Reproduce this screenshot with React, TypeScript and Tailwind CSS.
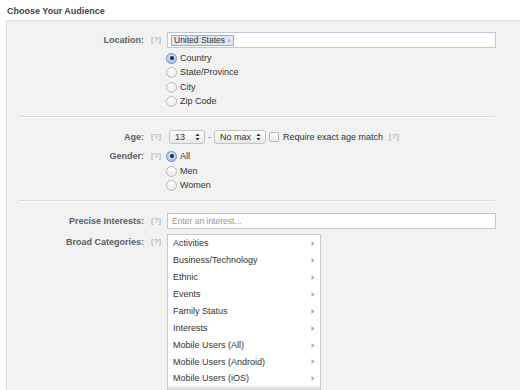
import React from "react";

const font = { fontFamily: '"Liberation Sans", Arial, sans-serif' };

function Help() {
  return <span className="text-[8px] leading-none text-[#a0a0a0] tracking-[0.5px]">[?]</span>;
}

function Label({ text }: { text: string }) {
  return (
    <div className="flex shrink-0 items-center h-[16px] leading-none">
      <div className="w-[137px] text-right font-bold text-[9px] text-[#5a5f66]">{text}</div>
      <div className="w-[23px] pl-[7px] text-[8px] flex items-center"><Help /></div>
    </div>
  );
}

function Radio({ checked, label, h }: { checked?: boolean; label: string; h: string }) {
  return (
    <div className={`flex items-center ${h}`}>
      {checked ? (
        <span className="w-[11px] h-[11px] rounded-full border border-[#6b8fc4] bg-gradient-to-b from-[#dbe8f8] to-[#a9c6ec] flex items-center justify-center shadow-[inset_0_1px_1px_rgba(0,0,0,0.1)]">
          <span className="w-[4px] h-[4px] rounded-full bg-[#1d2a3d]" />
        </span>
      ) : (
        <span className="w-[11px] h-[11px] rounded-full border border-[#b8b8b8] bg-gradient-to-b from-[#ffffff] to-[#ececec] shadow-[0_1px_0_rgba(255,255,255,0.8)]" />
      )}
      <span className="ml-[3px] text-[9px] text-[#333]">{label}</span>
    </div>
  );
}

function Arrows() {
  return (
    <svg width="5" height="8" viewBox="0 0 5 8" className="ml-auto">
      <path d="M2.5 0.5 L4.5 3 L0.5 3 Z" fill="#333" />
      <path d="M2.5 7.5 L4.5 5 L0.5 5 Z" fill="#333" />
    </svg>
  );
}

function Sep() {
  return <div className="ml-[13px] w-[475px] border-t border-[#dcdcdc] border-b border-b-white" />;
}

const cats = [
  "Activities",
  "Business/Technology",
  "Ethnic",
  "Events",
  "Family Status",
  "Interests",
  "Mobile Users (All)",
  "Mobile Users (Android)",
  "Mobile Users (iOS)",
];

export default function App() {
  return (
    <div className="w-[520px] h-[390px] bg-white overflow-hidden text-[9px] leading-[1.2]" style={font}>
      <div className="h-[20px] pl-[7px] pt-[6px] font-bold text-[9px] text-[#444]">Choose Your Audience</div>
      <div className="ml-[6px] w-[514px] h-[370px] bg-[#f2f2f2] border-t border-l border-[#dedede] pt-[11px]">
        {/* Location */}
        <div className="flex">
          <Label text="Location:" />
          <div className="flex flex-col">
            <div className="w-[329px] h-[16px] bg-white border border-[#bdc7d8] flex items-center pl-[3px]">
              <span className="h-[11px] flex items-center px-[2px] bg-[#e2e6f0] border border-[#9dacc9] text-[8.5px] text-[#333] leading-none">
                United States<span className="ml-[2px] text-[#8d9bb8] text-[7px]">×</span>
              </span>
            </div>
            <div className="mt-[3px] -ml-[1px]">
              <Radio checked label="Country" h="h-[14.5px]" />
              <Radio label="State/Province" h="h-[14.5px]" />
              <Radio label="City" h="h-[14.5px]" />
              <Radio label="Zip Code" h="h-[14.5px]" />
            </div>
          </div>
        </div>
        <div className="mt-[7px]"><Sep /></div>
        {/* Age */}
        <div className="flex items-center mt-[11px] h-[16px]">
          <Label text="Age:" />
          <div className="flex items-center">
            <div className="ml-[2px] w-[36px] h-[14px] rounded-[3px] border border-[#c4c4c4] bg-gradient-to-b from-white to-[#e8e8e8] flex items-center pl-[5px] pr-[4px] text-[9px] text-[#333]">
              13<Arrows />
            </div>
            <span className="mx-[3px] text-[9px] text-[#666]">-</span>
            <div className="w-[52px] h-[14px] rounded-[3px] border border-[#c4c4c4] bg-gradient-to-b from-white to-[#e8e8e8] flex items-center pl-[5px] pr-[4px] text-[9px] text-[#333]">
              No max<Arrows />
            </div>
            <span className="ml-[3px] w-[10px] h-[10px] rounded-[2px] border border-[#b3b3b3] bg-gradient-to-b from-white to-[#ededed]" />
            <span className="ml-[4px] text-[9px] text-[#333]">Require exact age match</span>
            <span className="ml-[6px] flex items-center"><Help /></span>
          </div>
        </div>
        {/* Gender */}
        <div className="flex mt-[4px]">
          <div className="h-[14.75px] flex items-center"><Label text="Gender:" /></div>
          <div className="-ml-[1px]">
            <Radio checked label="All" h="h-[14.75px]" />
            <Radio label="Men" h="h-[14.75px]" />
            <Radio label="Women" h="h-[14.75px]" />
          </div>
        </div>
        <div className="mt-[7px]"><Sep /></div>
        {/* Precise */}
        <div className="flex mt-[11px]">
          <Label text="Precise Interests:" />
          <div className="w-[329px] h-[16px] bg-white border border-[#bdc7d8] flex items-center pl-[4px] text-[8.5px] text-[#999]">
            Enter an interest...
          </div>
        </div>
        {/* Broad */}
        <div className="flex mt-[5px]">
          <div><Label text="Broad Categories:" /></div>
          <div className="relative w-[154px] h-[160px] bg-white border border-[#c9c9c9] border-b-0 overflow-hidden">
            <div>
              {cats.map((c) => (
                <div key={c} className="h-[16.9px] flex items-center pl-[5px] pr-[5px] text-[9px] text-[#333]">
                  <span>{c}</span>
                  <svg width="4" height="5" viewBox="0 0 4 5" className="ml-auto">
                    <path d="M0.5 0 L3.5 2.5 L0.5 5 Z" fill="#aaa" />
                  </svg>
                </div>
              ))}
            </div>
            <div className="absolute left-0 right-0 top-[150px] h-[6px] bg-gradient-to-b from-transparent to-[#c8c8c8]" />
          </div>
        </div>
      </div>
    </div>
  );
}
